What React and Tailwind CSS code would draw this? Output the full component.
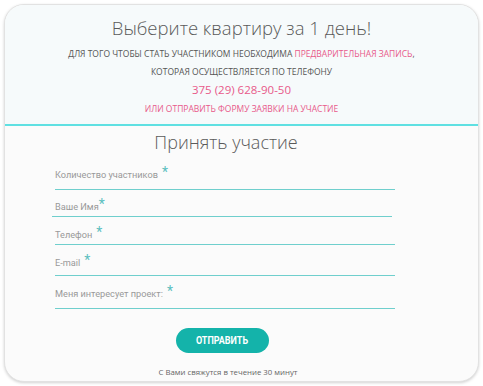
export default function App() {
  const fields = [
    { label: 'Количество участников', gap: true, top: 'mt-[15px]', under: 'mt-[8px] ml-[1px]' },
    { label: 'Ваше Имя', gap: false, top: 'mt-[11px]', under: 'mt-[3px] -ml-[2px]' },
    { label: 'Телефон', gap: true, top: 'mt-[12px]', under: 'mt-[3px] ml-[1px]' },
    { label: 'E-mail', gap: true, top: 'mt-[12px]', under: 'mt-[6px] ml-[1px]' },
    { label: 'Меня интересует проект:', gap: true, top: 'mt-[12px]', under: 'mt-[8px] ml-[1px]' },
  ]

  return (
    <div className="w-[483px] h-[386px] bg-white p-[4px] font-['Open_Sans',sans-serif]">
      <div className="w-[475px] h-[378px] rounded-[20px] border border-[#e2e2e2] shadow-[0_1px_3px_rgba(0,0,0,0.18)] overflow-hidden bg-[#fbfbfb] flex flex-col">
        <div className="bg-[#f6fafb] border-b-2 border-[#5fe0e2] h-[121px] flex flex-col items-center">
          <h1 className="mt-[11px] text-[18.5px] leading-[24px] font-light text-[#5a5a5a]">Выберите квартиру за 1 день!</h1>
          <p className="mt-[8px] text-[8.5px] leading-[12px] uppercase text-[#555]">
            Для того чтобы стать участником необходима <span className="text-[#e8598a]">предварительная запись</span>,
          </p>
          <p className="mt-[6px] text-[8.5px] leading-[12px] uppercase text-[#555]">которая осуществляется по телефону</p>
          <p className="mt-[4px] text-[11.5px] leading-[16px] text-[#e8598a]">375 (29) 628-90-50</p>
          <p className="mt-[5px] text-[8.5px] leading-[12px] uppercase text-[#e8598a]">или отправить форму заявки на участие</p>
        </div>
        <div className="flex-1 flex flex-col items-center">
          <div className="w-[340px] mr-[35px] flex flex-col">
            <h2 className="self-center ml-[4px] mt-[4px] text-[18px] leading-[24px] font-light text-[#5a5a5a]">Принять участие</h2>
            {fields.map((f) => (
              <div key={f.label} className="flex flex-col">
                <div className={`${f.top} h-[12px] pl-[1px] flex items-center font-['Roboto',sans-serif] text-[9.2px] leading-[12px] text-[#999]`}>
                  <span>{f.label}</span>
                  <span className={`${f.gap ? 'ml-[4px]' : ''} -translate-y-[3px] text-[14px] leading-[12px] text-[#5bbfbf]`}>*</span>
                </div>
                <div className={`h-[1px] w-[340px] bg-[#6fcfcd] ${f.under}`} />
              </div>
            ))}
            <button className="self-center -ml-[4px] mt-[19px] w-[93px] h-[25px] rounded-full bg-[#14b3aa] text-white text-[10px] font-bold font-['Roboto',sans-serif]">
              <span className="inline-block scale-x-90">ОТПРАВИТЬ</span>
            </button>
            <p className="self-center ml-[8px] mt-[14px] text-[7.8px] leading-[10px] text-[#666]">С Вами свяжутся в течение 30 минут</p>
          </div>
        </div>
      </div>
    </div>
  )
}
